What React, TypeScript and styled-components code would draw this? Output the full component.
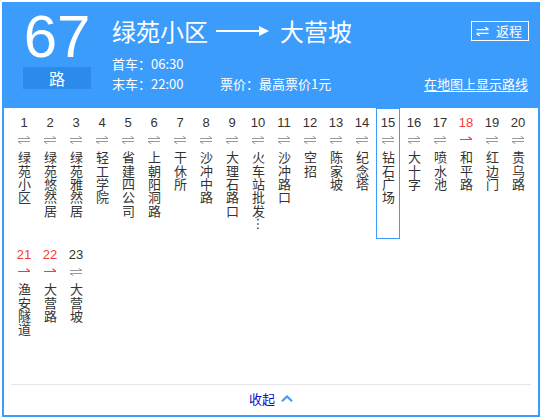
import React from "react";
import styled, { createGlobalStyle, css } from "styled-components";

const BLUE = "#3c9cfb";
const DARK_BLUE = "#2b8aea";
const RED = "#f43c3c";

const Global = createGlobalStyle`
  html, body { margin: 0; padding: 0; background: #fff; }
  body { font-family: "Noto Sans CJK SC", "Liberation Sans", sans-serif; }
`;

const Page = styled.div`
  padding: 2px;
`;

const Panel = styled.div`
  width: 538px;
  height: 415px;
  box-sizing: border-box;
  border: 2px solid ${BLUE};
  background: #fff;
  display: flex;
  flex-direction: column;
`;

const Header = styled.div`
  height: 104px;
  box-sizing: border-box;
  padding: 3px 9px 0 19px;
  background: ${BLUE};
  color: #fff;
  display: flex;
`;

const Badge = styled.div`
  width: 68px;
  display: flex;
  flex-direction: column;
`;

const LineNo = styled.div`
  font-family: "Liberation Sans", Arial, sans-serif;
  font-size: 60px;
  line-height: 60px;
  text-align: center;
`;

const LuBox = styled.div`
  height: 22px;
  background: ${DARK_BLUE};
  font-size: 16px;
  line-height: 22px;
  text-align: center;
`;

const Info = styled.div`
  flex: 1;
  margin-left: 21px;
  display: flex;
  flex-direction: column;
`;

const TitleRow = styled.div`
  margin-top: 8px;
  height: 32px;
  display: flex;
  align-items: center;
`;

const Terminal = styled.span`
  font-size: 24px;
  line-height: 32px;
  white-space: nowrap;
`;

const LongArrow = styled.svg`
  margin: 0 11px 0 8px;
  flex: none;
`;

const ReturnButton = styled.button`
  margin-left: auto;
  height: 20px;
  box-sizing: border-box;
  border: 1px solid #fff;
  background: transparent;
  color: #fff;
  padding: 0 6px 0 4px;
  display: flex;
  align-items: center;
  gap: 7px;
  font-family: "Noto Sans CJK SC", sans-serif;
  font-size: 13px;
  line-height: 18px;
  cursor: pointer;
`;

const InfoRow = styled.div<{ $first?: boolean }>`
  display: flex;
  font-size: 13px;
  line-height: 20px;
  white-space: nowrap;
  ${(p) => p.$first && css`margin-top: 7px;`}
`;

const TimeText = styled.span`
  width: 108px;
`;

const MapLink = styled.a`
  margin-left: auto;
  margin-right: 1px;
  color: #fff;
  text-decoration: underline;
  text-underline-offset: 2px;
  cursor: pointer;
`;

const Body = styled.div`
  flex: 1;
  padding: 0 7px;
  display: flex;
  flex-direction: column;
`;

const StopGrid = styled.div`
  display: grid;
  grid-template-columns: repeat(20, 26px);
  grid-auto-rows: 132px;
`;

const Stop = styled.div<{ $active?: boolean }>`
  display: flex;
  flex-direction: column;
  align-items: center;
  padding-top: 7px;
  ${(p) =>
    p.$active &&
    css`
      box-shadow: inset 0 0 0 1px ${BLUE};
      margin: 0 1px 1px;
    `}
`;

const StopNo = styled.div<{ $oneWay?: boolean }>`
  font-family: "Liberation Sans", Arial, sans-serif;
  font-size: 13px;
  line-height: 16px;
  color: ${(p) => (p.$oneWay ? RED : "#333")};
`;

const DirIcon = styled.svg`
  margin-top: 5px;
  display: block;
`;

const StopName = styled.div`
  margin-top: 7px;
  writing-mode: vertical-rl;
  text-orientation: mixed;
  font-size: 13px;
  line-height: 14px;
  letter-spacing: 0.3px;
  color: #333;
`;

const Divider = styled.div`
  margin-top: 12px;
  height: 1px;
  background: #e6e6e6;
`;

const Footer = styled.div`
  height: 30px;
  box-sizing: border-box;
  padding-bottom: 3px;
  display: flex;
  align-items: center;
  justify-content: center;
  gap: 6px;
`;

const Collapse = styled.span`
  font-size: 13px;
  line-height: 20px;
  color: #1010c8;
  cursor: pointer;
`;

type StopData = { no: number; name: string; oneWay?: boolean };

const stops: StopData[] = [
  { no: 1, name: "绿苑小区" },
  { no: 2, name: "绿苑悠然居" },
  { no: 3, name: "绿苑雅然居" },
  { no: 4, name: "轻工学院" },
  { no: 5, name: "省建四公司" },
  { no: 6, name: "上朝阳洞路" },
  { no: 7, name: "干休所" },
  { no: 8, name: "沙冲中路" },
  { no: 9, name: "大理石路口" },
  { no: 10, name: "火车站批发…" },
  { no: 11, name: "沙冲路口" },
  { no: 12, name: "空招" },
  { no: 13, name: "陈家坡" },
  { no: 14, name: "纪念塔" },
  { no: 15, name: "钻石广场" },
  { no: 16, name: "大十字" },
  { no: 17, name: "喷水池" },
  { no: 18, name: "和平路", oneWay: true },
  { no: 19, name: "红边门" },
  { no: 20, name: "贵乌路" },
  { no: 21, name: "渔安隧道", oneWay: true },
  { no: 22, name: "大营路", oneWay: true },
  { no: 23, name: "大营坡" },
];

const BothWays = ({ color = "#999" }: { color?: string }) => (
  <DirIcon width="12" height="8" viewBox="0 0 12 8" fill="none" stroke={color} strokeWidth="1">
    <path d="M0 2.5H12M12 2.5L8.5 0" />
    <path d="M0 5.5H12M0 5.5L3.5 8" />
  </DirIcon>
);

const OneWay = () => (
  <DirIcon width="12" height="8" viewBox="0 0 12 8" fill="none" stroke={RED} strokeWidth="1.2">
    <path d="M0 3.5H12M12 3.5L8.5 0.8" />
  </DirIcon>
);

export default function App() {
  return (
    <>
      <Global />
      <Page>
        <Panel>
          <Header>
            <Badge>
              <LineNo>67</LineNo>
              <LuBox>路</LuBox>
            </Badge>
            <Info>
              <TitleRow>
                <Terminal>绿苑小区</Terminal>
                <LongArrow width="53" height="12" viewBox="0 0 53 12">
                  <path d="M0 6H45" stroke="#fff" strokeWidth="2" />
                  <path d="M43 1L53 6L43 11Z" fill="#fff" />
                </LongArrow>
                <Terminal>大营坡</Terminal>
                <ReturnButton>
                  <svg width="13" height="9" viewBox="0 0 13 9" fill="none" stroke="#fff" strokeWidth="1.4">
                    <path d="M0.5 2.6H12.5M12.5 2.6L9 0" />
                    <path d="M0.5 6.4H12.5M0.5 6.4L4 9" />
                  </svg>
                  返程
                </ReturnButton>
              </TitleRow>
              <InfoRow $first>
                <TimeText>首车：06:30</TimeText>
              </InfoRow>
              <InfoRow>
                <TimeText>末车：22:00</TimeText>
                <span>票价：最高票价1元</span>
                <MapLink>在地图上显示路线</MapLink>
              </InfoRow>
            </Info>
          </Header>
          <Body>
            <StopGrid>
              {stops.map((s) => (
                <Stop key={s.no} $active={s.no === 15}>
                  <StopNo $oneWay={s.oneWay}>{s.no}</StopNo>
                  {s.oneWay ? <OneWay /> : <BothWays />}
                  <StopName>{s.name}</StopName>
                </Stop>
              ))}
            </StopGrid>
            <Divider />
            <Footer>
              <Collapse>收起</Collapse>
              <svg width="12" height="7" viewBox="0 0 12 7" fill="none" stroke={BLUE} strokeWidth="2.2">
                <path d="M1 6.2L6 1.5L11 6.2" />
              </svg>
            </Footer>
          </Body>
        </Panel>
      </Page>
    </>
  );
}
